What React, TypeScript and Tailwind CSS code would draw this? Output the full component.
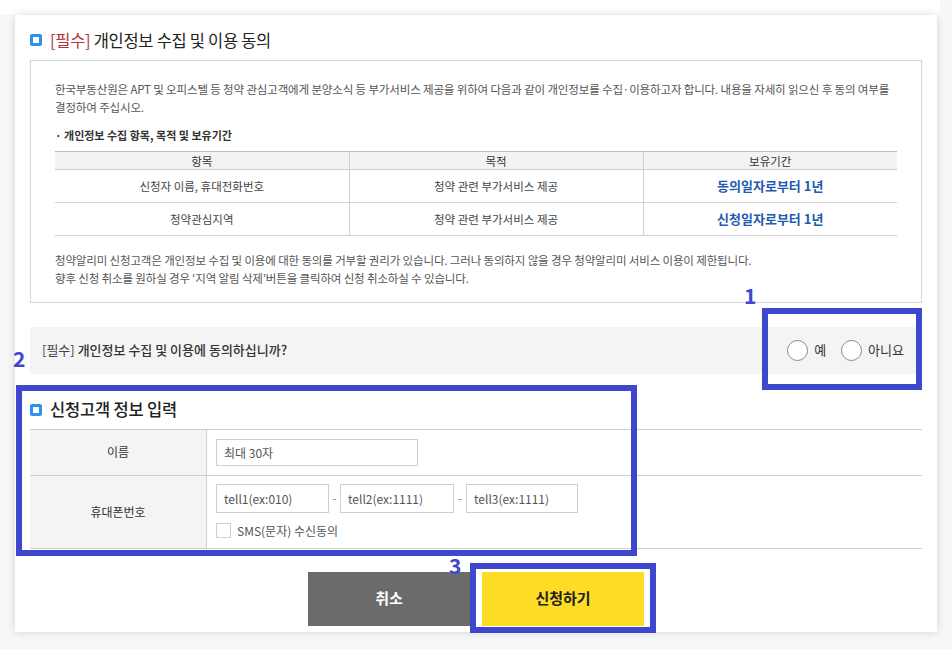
import React from "react";

const font = { fontFamily: '"Noto Sans CJK KR", "Noto Sans", sans-serif' };

function SquareIcon() {
  return (
    <span className="inline-flex h-[12px] w-[12px] items-center justify-center rounded-[2px] bg-[#2d93e8]">
      <span className="h-[6px] w-[6px] bg-white" />
    </span>
  );
}

function Radio({ label }: { label: string }) {
  return (
    <label className="flex items-center gap-[6px]">
      <span className="h-[21px] w-[21px] rounded-full border border-[#8a8a8a] bg-white" />
      <span className="text-[13px] text-[#333]">{label}</span>
    </label>
  );
}

const rows = [
  { item: "신청자 이름, 휴대전화번호", purpose: "청약 관련 부가서비스 제공", period: "동의일자로부터 1년" },
  { item: "청약관심지역", purpose: "청약 관련 부가서비스 제공", period: "신청일자로부터 1년" },
];

export default function App() {
  return (
    <div className="relative h-[649px] w-[952px] overflow-hidden bg-[#f7f7f7]" style={font}>
      <div className="absolute left-0 top-0 h-[15px] w-[940px] bg-white" />
      <div className="relative ml-[15px] mt-[15px] w-[922px] bg-white px-[15px] pb-[6px] pt-[15px] shadow-[0_0_8px_rgba(0,0,0,0.14)]">
        {/* 개인정보 수집 동의 */}
        <div className="flex h-[20px] items-center gap-[8px]">
          <SquareIcon />
          <h2 className="text-[16.5px] leading-[20px] tracking-[-0.3px] text-[#222]">
            <span className="text-[#b3363a]">[필수]</span> 개인정보 수집 및 이용 동의
          </h2>
        </div>

        <div className="mt-[10px] border border-[#d6d6d6] px-[24px] pb-[15px] pt-[19px] text-[11.5px] leading-[18px] tracking-[-0.15px] text-[#555]">
          <p className="whitespace-nowrap">
            한국부동산원은 APT 및 오피스텔 등 청약 관심고객에게 분양소식 등 부가서비스 제공을 위하여 다음과 같이 개인정보를 수집·이용하고자 합니다. 내용을 자세히 읽으신 후 동의 여부를
            <br />
            결정하여 주십시오.
          </p>
          <p className="mt-[10px] text-[11px] font-bold tracking-normal text-[#333]">· 개인정보 수집 항목, 목적 및 보유기간</p>

          <table className="mt-[7px] w-full border-collapse text-center text-[11.5px] leading-[16px] tracking-normal text-[#444]">
            <colgroup>
              <col className="w-[294px]" />
              <col className="w-[294px]" />
              <col />
            </colgroup>
            <thead>
              <tr className="h-[18px] border-t border-[#bdbdbd] bg-[#f3f3f3] text-[#333]">
                <th className="border-r border-[#d0d0d0] p-0 font-normal">항목</th>
                <th className="border-r border-[#d0d0d0] p-0 font-normal">목적</th>
                <th className="p-0 font-normal">보유기간</th>
              </tr>
            </thead>
            <tbody>
              {rows.map((r) => (
                <tr key={r.period} className="h-[33px] border-t border-[#d0d0d0]">
                  <td className="border-r border-[#d0d0d0] p-0">{r.item}</td>
                  <td className="border-r border-[#d0d0d0] p-0">{r.purpose}</td>
                  <td className="p-0 text-[13px] font-bold text-[#1f5bb0]">{r.period}</td>
                </tr>
              ))}
              <tr className="border-t border-[#d0d0d0]" />
            </tbody>
          </table>

          <p className="mt-[15px] whitespace-nowrap">
            청약알리미 신청고객은 개인정보 수집 및 이용에 대한 동의를 거부할 권리가 있습니다. 그러나 동의하지 않을 경우 청약알리미 서비스 이용이 제한됩니다.
            <br />
            향후 신청 취소를 원하실 경우 ‘지역 알림 삭제’버튼을 클릭하여 신청 취소하실 수 있습니다.
          </p>
        </div>

        {/* 동의 여부 */}
        <div className="mt-[24px] flex h-[47px] items-center justify-between bg-[#f4f4f4] pl-[12px] pr-[18px]">
          <p className="text-[13px] text-[#444]">
            [필수] <span className="font-medium text-[#333]">개인정보 수집 및 이용에 동의하십니까?</span>
          </p>
          <div className="flex items-center gap-[15px]">
            <Radio label="예" />
            <Radio label="아니요" />
          </div>
        </div>

        {/* 신청고객 정보 입력 */}
        <div className="mt-[25px] flex h-[22px] items-center gap-[8px]">
          <SquareIcon />
          <h2 className="text-[16.5px] font-medium tracking-[-0.2px] text-[#222]">신청고객 정보 입력</h2>
        </div>

        <div className="mt-[8px] border-t border-[#cfcfcf] text-[12px] text-[#333]">
          <div className="flex h-[46px] border-b border-[#cfcfcf]">
            <div className="flex w-[177px] items-center justify-center border-r border-[#cfcfcf] bg-[#f4f4f4]">이름</div>
            <div className="flex items-center pl-[9px]">
              <input
                className="h-[27px] w-[202px] border border-[#cfcfcf] px-[7px] text-[12px] outline-none placeholder:text-[#555]"
                placeholder="최대 30자"
              />
            </div>
          </div>
          <div className="flex h-[73px] border-b border-[#cfcfcf]">
            <div className="flex w-[177px] items-center justify-center border-r border-[#cfcfcf] bg-[#f4f4f4]">휴대폰번호</div>
            <div className="flex flex-col pl-[9px] pt-[8px]">
              <div className="flex items-center text-[#888]">
                <input className="h-[29px] w-[113px] border border-[#cfcfcf] px-[7px] text-[12px] outline-none placeholder:text-[#555]" placeholder="tell1(ex:010)" />
                <span className="w-[11px] text-center">-</span>
                <input className="h-[29px] w-[114px] border border-[#cfcfcf] px-[7px] text-[12px] outline-none placeholder:text-[#555]" placeholder="tell2(ex:1111)" />
                <span className="w-[12px] text-center">-</span>
                <input className="h-[29px] w-[112px] border border-[#cfcfcf] px-[7px] text-[12px] outline-none placeholder:text-[#555]" placeholder="tell3(ex:1111)" />
              </div>
              <label className="mt-[9px] flex items-center gap-[6px] text-[#555]">
                <span className="h-[15px] w-[15px] border border-[#cfcfcf] bg-white" />
                SMS(문자) 수신동의
              </label>
            </div>
          </div>
        </div>

        {/* 버튼 */}
        <div className="mt-[23px] flex justify-center gap-[12px]">
          <button className="h-[54px] w-[162px] bg-[#6b6b6b] text-[15px] font-bold text-white">취소</button>
          <button className="h-[54px] w-[162px] bg-[#fddc25] text-[15px] font-bold text-[#222]">신청하기</button>
        </div>
      </div>

      {/* annotations */}
      <span className="absolute left-[744px] top-[285px] text-[21px] font-bold leading-none text-[#3f48cc]">1</span>
      <div className="absolute left-[762px] top-[308px] h-[82px] w-[160px] border-[6px] border-[#3f48cc]" />
      <span className="absolute left-[13px] top-[348px] text-[21px] font-bold leading-none text-[#3f48cc]">2</span>
      <div className="absolute left-[16px] top-[385px] h-[171px] w-[621px] border-[6px] border-[#3f48cc]" />
      <span className="absolute left-[449px] top-[555px] text-[21px] font-bold leading-none text-[#3f48cc]">3</span>
      <div className="absolute left-[470px] top-[563px] h-[70px] w-[186px] border-[6px] border-[#3f48cc]" />
    </div>
  );
}
